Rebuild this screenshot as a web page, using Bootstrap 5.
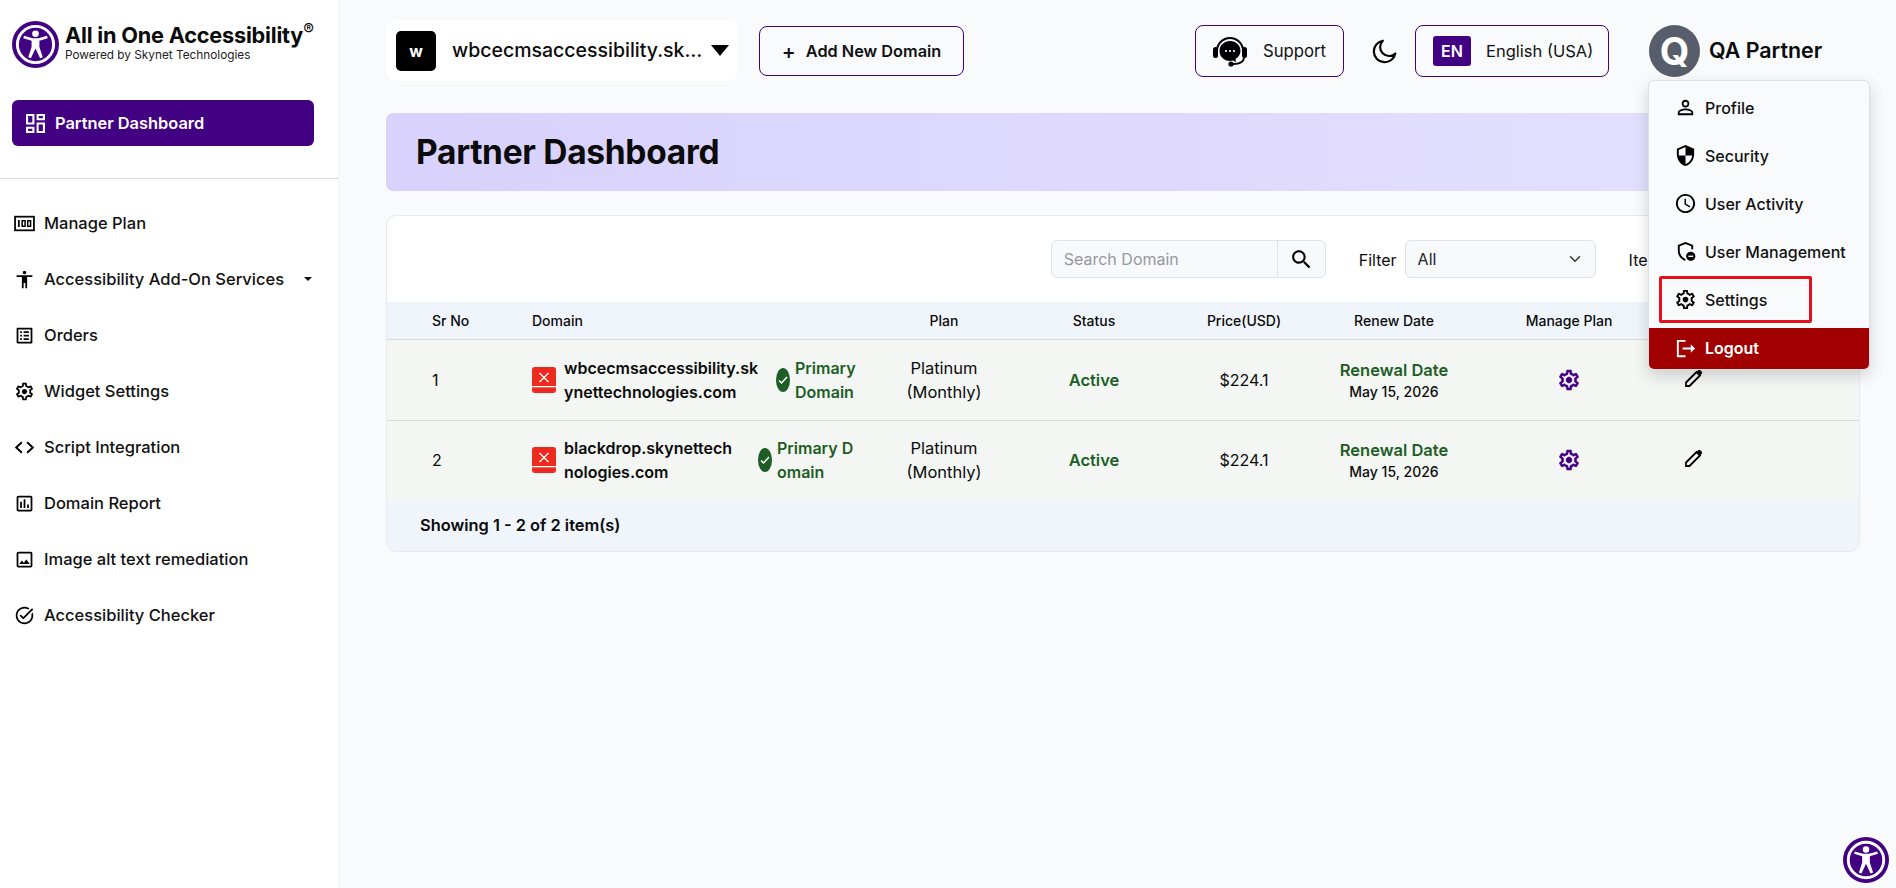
<!doctype html>
<html lang="en">
<head>
<meta charset="utf-8">
<title>Partner Dashboard</title>
<link href="https://cdn.jsdelivr.net/npm/bootstrap@5.3.0/dist/css/bootstrap.min.css" rel="stylesheet">
<style>
:root{--pu:#420083;--gr:#1e5e26}
html,body{height:100%}
body{font-family:Inter,"Liberation Sans",sans-serif;background:#f8fafc;color:#0b0b0b;overflow:hidden}
.shell{height:888px}
.side{width:339px;flex:none;background:#fff;border-right:1px solid #f0f2f5;height:100%}
.brand{padding:21px 12px 0;height:100px;gap:6px}
.brand-name{font-size:21.700px;font-weight:700;line-height:26px;padding-top:1px;letter-spacing:-.2px;white-space:nowrap}
.brand-name sup{font-size:16px;font-weight:500;top:-.5em}
.brand-sub{font-size:11.800px;line-height:15px;white-space:nowrap;color:#222}
.pd-btn{margin:0 24px 0 12px;height:46px;background:var(--pu);color:#fff;border-radius:6px;font-size:16.400px;font-weight:600;padding-left:14px;gap:10px;text-decoration:none}
.pd-btn:hover{color:#fff}
.side-rule{margin:32px 0 16px;border-color:#d8dbe0;opacity:1}
.side-link{height:56px;padding:0 26px 0 14px;gap:9px;color:#111;font-size:16.500px;font-weight:500;text-decoration:none}
.side-link:hover{color:#111}
.side-link svg{width:21px;height:21px;flex:none}
.side-link.dropdown-toggle::after{margin-left:auto;color:#111}
.main-area{min-width:0;padding:20px 36px 0 47px}
.top{height:61px;margin-bottom:32px}
.dom-pick{width:352px;height:61px;background:#fff;border-radius:10px;padding:0 9px 0 10px;font-size:19.500px;font-weight:500}
.dom-tile{width:40px;height:40px;background:#000;color:#fff;border-radius:5px;font-size:16px;font-weight:700;margin-right:16px;flex:none}
.dom-text{min-width:0;white-space:nowrap;flex:1 1 auto}
.tri{width:0;height:0;border-left:9px solid transparent;border-right:9px solid transparent;border-top:11px solid #000;flex:none}
.out-btn{border:1px solid var(--pu);border-radius:8px;background:transparent;color:#111;padding-top:8px}
.add-btn{width:205px;height:50px;margin-left:21px;font-size:16.300px;font-weight:600;gap:10px}
.add-btn span{font-size:21px;font-weight:500;line-height:1}
.add-btn:hover,.add-btn:active{border-color:var(--pu)!important;background:transparent!important;color:#111!important}
.sup-btn{width:149px;height:52px;gap:15px;font-size:16.700px;padding-left:16px}
.moon{width:26px;height:26px;margin:0 17px 0 28px;flex:none}
.lang-btn{width:194px;height:52px;font-size:16.500px;padding-left:17px;gap:15px}
.en-tile{width:38px;height:30px;background:var(--pu);color:#fff;border-radius:3px;font-weight:600;font-size:16px;margin-top:-1px}
.user-box{width:211px;height:52px;margin-left:40px;gap:9px;font-size:21.400px;font-weight:600;white-space:nowrap}
.avatar{width:51px;height:52px;border-radius:50%;background:#585d6b;color:#fff;font-size:38px;font-weight:700;flex:none;line-height:1}
.user-menu.dropdown-menu{display:block;top:55px;left:-1px;width:222px;padding:7px 0 0;margin:0;background:#f9fafc;border:1px solid #dcdfe3;border-radius:6px;box-shadow:0 6px 16px rgba(0,0,0,.16);overflow:hidden;z-index:1000}
.user-menu .dropdown-item{height:40px;padding:0 0 0 25px;gap:8px;font-size:16px;font-weight:500;color:#111;background:transparent}
.user-menu li+li{margin-top:8px}
.user-menu svg{width:23px;height:23px;flex:none}
.user-menu .dropdown-item.out-item{background:#a10000;color:#fff;font-weight:600;height:41px}
.mark-box{position:absolute;left:10px;top:195px;width:153px;height:47px;border:3px solid #e5101d;border-radius:2px;pointer-events:none}
.user-menu li.mark-box{margin:0}
.hero{height:78px;border-radius:7px;background:linear-gradient(90deg,#d8d2fc,#e5e1fe);padding-left:30px;margin-bottom:24px}
.hero h1{margin:0;font-size:33.500px;font-weight:700;letter-spacing:-.3px}
.panel{background:#fff;border:1px solid #e6e9ee;border-radius:10px;overflow:hidden;height:337px}
.tools{height:86px;padding:24px 0 0;font-size:16px}
.tools .input-group{width:275px;height:38px;flex:none}
.tools .form-control,.tools .form-select,.srch-btn{background-color:#f8f9fb;border-color:#dfe2e6;height:38px;font-size:16px}
.tools .form-control::placeholder{color:#94989e}
.srch-btn{width:49px;border:1px solid #dfe2e6;padding:0;color:#000}
.srch-btn svg{width:25px;height:25px}
.tools .lbl{margin-left:33px;margin-right:8px}
.filter-sel{width:191px;flex:none}
.items-sel{width:181px;flex:none}
.grid-tbl{table-layout:fixed;width:1472px;margin:0;font-size:16px;--bs-table-bg:transparent;--bs-table-color:#0b0b0b}
.grid-tbl thead th{height:37px;background:#f0f5fc;font-size:14px;font-weight:500;padding:0;vertical-align:middle;border-bottom:1px solid #d9dde0;text-align:center}
.grid-tbl td{background:#f3f6f3;padding:0;height:81px;vertical-align:middle;text-align:center;line-height:24px;border-bottom:1px solid #d9dde0}
.grid-tbl tr:last-child td{height:79px;border-bottom:0}
.grid-tbl .ta-l{text-align:left;padding-left:45px}
.grid-tbl .ta-d{text-align:left;padding-left:8px}
.grid-tbl .ta-e{text-align:left;padding-left:16px}
.x-icon{width:24px;height:26px;flex:none;margin-right:8px}
.dn{font-weight:600;white-space:nowrap;font-size:16px;flex:none}
.dn-a{width:212px}.dn-b{width:194px}
.tick{width:14px;height:24px;border-radius:50%;background:var(--gr);flex:none;margin-right:5px}
.tick svg{width:10px;height:10px}
.prim{color:var(--gr);font-weight:600;white-space:nowrap;font-size:16px}
.plan-txt{font-size:16.500px}
.ok-txt{color:var(--gr);font-weight:600;font-size:16.500px}
.rn-t{color:var(--gr);font-weight:600;font-size:16.500px;line-height:22px;padding-top:2px}
.rn-d{font-size:14px;font-weight:500;line-height:22px}
.gear-p{display:block;width:24px;height:24px;margin:0 auto;stroke:#420083;stroke-width:.5}
.pen{display:block;width:18px;height:18px;margin-top:-4px}
.tbl-foot{height:52px;background:#f0f5fc;padding-left:33px;font-size:16.400px;font-weight:600}
.a11y-fab{position:fixed;right:7px;bottom:5px;width:46px;height:46px}
</style>
</head>
<body>
<div class="d-flex shell">
  <aside class="side d-flex flex-column">
    <div class="brand d-flex align-items-start">
      <svg width="47" height="47" viewBox="0 0 48 48" class="flex-none"><circle cx="24" cy="24" r="24" fill="#420083"/><circle cx="24" cy="24" r="18.500" fill="none" stroke="#fff" stroke-width="3"/><circle cx="24" cy="13" r="3.400" fill="#fff"/><path d="M11.500 17.500l8.500 2.600v6.400L16.600 37l2.700 1 4.700-10 4.700 10 2.700-1L28 26.500v-6.400l8.500-2.600-.8-2.500-8.700 2.500h-6l-8.700-2.500z" fill="#fff"/></svg>
      <div>
        <div class="brand-name">All in One Accessibility<sup>®</sup></div>
        <div class="brand-sub">Powered by Skynet Technologies</div>
      </div>
    </div>
    <a href="#" class="pd-btn d-flex align-items-center">
      <svg width="19" height="19" viewBox="3 3 18 18" fill="#fff"><path d="M19 5v2h-4V5h4M9 5v6H5V5h4m10 8v6h-4v-6h4M9 17v2H5v-2h4M21 3h-8v6h8V3zM11 3H3v10h8V3zm10 8h-8v10h8V11zm-10 4H3v6h8v-6z"/></svg>
      Partner Dashboard
    </a>
    <hr class="side-rule">
    <nav class="nav flex-column">
      <a href="#" class="side-link d-flex align-items-center"><svg viewBox="0 0 24 24"><rect x="1.200" y="4.200" width="21.600" height="15.600" fill="none" stroke="#000" stroke-width="2"/><path d="M4.500 8h2v8h-2z"/><path fill-rule="evenodd" d="M8.500 8h5v8h-5zm1.700 1.600v4.800h1.600V9.600zM14.800 8h5v8h-5zm1.700 1.600v4.800h1.600V9.600z"/></svg>Manage Plan</a>
      <a href="#" class="side-link d-flex align-items-center dropdown-toggle"><svg viewBox="0 0 24 24"><path d="M12 2c1.100 0 2 .9 2 2s-.9 2-2 2-2-.9-2-2 .9-2 2-2zm9 7h-6v13h-2v-6h-2v6H9V9H3V7h18v2z"/></svg>Accessibility Add-On Services</a>
      <a href="#" class="side-link d-flex align-items-center"><svg viewBox="0 0 24 24"><path d="M19 5v14H5V5h14m1.100-2H3.900c-.5 0-.9.4-.9.9v16.200c0 .4.4.9.9.9h16.200c.4 0 .9-.5.9-.9V3.900c0-.5-.5-.9-.9-.9zM11 7h6v2h-6V7zm0 4h6v2h-6v-2zm0 4h6v2h-6zM7 7h2v2H7zm0 4h2v2H7zm0 4h2v2H7z"/></svg>Orders</a>
      <a href="#" class="side-link d-flex align-items-center"><svg viewBox="0 0 24 24"><use href="#gear"/></svg>Widget Settings</a>
      <a href="#" class="side-link d-flex align-items-center"><svg viewBox="0 0 24 24" fill="none" stroke="#000" stroke-width="2.200"><path d="M9 6l-6.500 6L9 18M15 6l6.500 6L15 18"/></svg>Script Integration</a>
      <a href="#" class="side-link d-flex align-items-center"><svg viewBox="0 0 24 24"><path d="M19 3H5c-1.100 0-2 .9-2 2v14c0 1.100.9 2 2 2h14c1.100 0 2-.9 2-2V5c0-1.100-.9-2-2-2zm0 16H5V5h14v14zM7 10h2v7H7zm4-3h2v10h-2zm4 6h2v4h-2z"/></svg>Domain Report</a>
      <a href="#" class="side-link d-flex align-items-center"><svg viewBox="0 0 24 24"><path d="M19 5v14H5V5h14m0-2H5c-1.100 0-2 .9-2 2v14c0 1.100.9 2 2 2h14c1.100 0 2-.9 2-2V5c0-1.100-.9-2-2-2zm-4.860 8.860l-3 3.870L9 13.140 6 17h12l-3.860-5.140z"/></svg>Image alt text remediation</a>
      <a href="#" class="side-link d-flex align-items-center"><svg viewBox="0 0 24 24"><path d="M22 5.180L10.590 16.600l-4.240-4.240 1.410-1.410 2.830 2.830 10-10L22 5.180zm-2.210 5.040c.13.570.21 1.170.21 1.780 0 4.420-3.580 8-8 8s-8-3.580-8-8 3.580-8 8-8c1.580 0 3.040.46 4.280 1.250l1.440-1.440C16.100 2.670 14.130 2 12 2 6.480 2 2 6.480 2 12s4.480 10 10 10 10-4.480 10-10c0-1.190-.22-2.330-.6-3.390l-1.610 1.610z"/></svg>Accessibility Checker</a>
    </nav>
  </aside>

  <main class="main-area flex-grow-1">
    <div class="top d-flex align-items-center">
      <div class="dom-pick d-flex align-items-center">
        <span class="dom-tile d-flex align-items-center justify-content-center">w</span>
        <span class="dom-text">wbcecmsaccessibility.sk…</span>
        <span class="tri"></span>
      </div>
      <button type="button" class="btn out-btn add-btn d-flex align-items-center justify-content-center"><span>+</span>Add New Domain</button>
      <button type="button" class="btn out-btn sup-btn d-flex align-items-center ms-auto">
        <svg width="36" height="30" viewBox="0 0 36 30"><path d="M5 14a13 13 0 0 1 26 0" fill="none" stroke="#000" stroke-width="2"/><rect x="1" y="10" width="5" height="11" rx="2.500"/><rect x="30" y="10" width="5" height="11" rx="2.500"/><path d="M18 4c-6 0-10.500 4.400-10.500 10S12 24 18 24c1 0 2-.1 3-.4L24 25l-.5-3c3-1.900 5-4.700 5-8C28.500 8.400 24 4 18 4z"/><path d="M32 20c0 5-5 7-11 7" fill="none" stroke="#000" stroke-width="1.800"/><circle cx="19" cy="27" r="2.600"/><circle cx="14" cy="14" r="1.100" fill="#fff"/><circle cx="18" cy="14" r="1.100" fill="#fff"/><circle cx="22" cy="14" r="1.100" fill="#fff"/></svg>
        Support
      </button>
      <svg class="moon" viewBox="0 0 24 24" fill="none" stroke="#000" stroke-width="2" stroke-linejoin="round"><path d="M21.500 14.300A10 10 0 1 1 10 2.500a8 8 0 0 0 11.500 11.800z"/></svg>
      <button type="button" class="btn out-btn lang-btn d-flex align-items-center"><span class="en-tile d-flex align-items-center justify-content-center">EN</span>English (USA)</button>
      <div class="user-box position-relative d-flex align-items-center">
        <span class="avatar d-flex align-items-center justify-content-center">Q</span>QA Partner
        <ul class="dropdown-menu user-menu list-unstyled">
          <li><a class="dropdown-item d-flex align-items-center" href="#"><svg viewBox="0 0 24 24"><path d="M12 5.900c1.160 0 2.100.94 2.100 2.100s-.94 2.100-2.100 2.100S9.900 9.160 9.900 8s.94-2.100 2.100-2.100m0 9c2.970 0 6.100 1.460 6.100 2.100v1.100H5.900V17c0-.64 3.130-2.100 6.100-2.100M12 4C9.790 4 8 5.790 8 8s1.790 4 4 4 4-1.790 4-4-1.790-4-4-4zm0 9c-2.670 0-8 1.340-8 4v3h16v-3c0-2.660-5.330-4-8-4z"/></svg>Profile</a></li>
          <li><a class="dropdown-item d-flex align-items-center" href="#"><svg viewBox="0 0 24 24"><path d="M12 1L3 5v6c0 5.550 3.840 10.740 9 12 5.160-1.260 9-6.450 9-12V5l-9-4zm0 10.990h7c-.53 4.120-3.280 7.790-7 8.940V12H5V6.300l7-3.110v8.800z"/></svg>Security</a></li>
          <li><a class="dropdown-item d-flex align-items-center" href="#"><svg viewBox="0 0 24 24"><path d="M11.990 2C6.470 2 2 6.480 2 12s4.470 10 9.990 10C17.520 22 22 17.520 22 12S17.520 2 11.990 2zM12 20c-4.420 0-8-3.580-8-8s3.580-8 8-8 8 3.580 8 8-3.580 8-8 8zm.5-13H11v6l5.250 3.150.75-1.230-4.500-2.670z"/></svg>User Activity</a></li>
          <li><a class="dropdown-item d-flex align-items-center" href="#"><svg viewBox="0 0 24 24"><path d="M12 2L4 5.200v6c0 4.800 3.100 9.200 7.500 10.600l.6-2c-3.400-1.200-6.100-4.800-6.100-8.600V6.600l6-2.400 6 2.400v3h2V5.200z"/><circle cx="17.500" cy="17" r="4.800"/><rect x="15" y="16.300" width="5" height="1.400" fill="#fff"/></svg>User Management</a></li>
          <li><a class="dropdown-item d-flex align-items-center" href="#"><svg viewBox="0 0 24 24"><use href="#gear"/></svg>Settings</a></li>
          <li><a class="dropdown-item out-item d-flex align-items-center" href="#"><svg viewBox="0 0 24 24" fill="#fff"><path d="M5 5h7V3H3v18h9v-2H5zM22 12l-4.500-4.500v3.500H9v2h8.500v3.500z"/></svg>Logout</a></li>
          <li class="mark-box"></li>
        </ul>
      </div>
    </div>

    <div class="hero d-flex align-items-center"><h1>Partner Dashboard</h1></div>

    <section class="panel">
      <div class="tools d-flex align-items-start justify-content-end">
        <div class="input-group">
          <input type="text" class="form-control" placeholder="Search Domain">
          <button type="button" class="srch-btn d-flex align-items-center justify-content-center rounded-end"><svg viewBox="0 0 24 24"><path d="M15.500 14h-.79l-.28-.27C15.410 12.590 16 11.110 16 9.500 16 5.910 13.090 3 9.500 3S3 5.910 3 9.500 5.910 16 9.500 16c1.610 0 3.090-.59 4.230-1.570l.27.28v.79l5 4.990L20.490 19l-4.990-5zm-6 0C7.010 14 5 11.990 5 9.500S7.010 5 9.500 5 14 7.010 14 9.500 11.990 14 9.500 14z"/></svg></button>
        </div>
        <label class="lbl lh-lg pt-1">Filter</label>
        <select class="form-select filter-sel"><option>All</option></select>
        <label class="lbl lh-lg pt-1">Items</label>
        <select class="form-select items-sel"><option>10</option></select>
      </div>
      <table class="table grid-tbl">
        <colgroup><col style="width:137px"><col style="width:345px"><col style="width:150px"><col style="width:150px"><col style="width:150px"><col style="width:150px"><col style="width:200px"><col style="width:190px"></colgroup>
        <thead><tr><th class="ta-l">Sr No</th><th class="ta-d">Domain</th><th>Plan</th><th>Status</th><th>Price(USD)</th><th>Renew Date</th><th>Manage Plan</th><th class="ta-e">Edit</th></tr></thead>
        <tbody>
          <tr>
            <td class="ta-l">1</td>
            <td class="ta-d"><div class="d-flex align-items-center">
              <svg class="x-icon" viewBox="0 0 24 26"><rect width="24" height="26" rx="3" fill="#ee2a1e"/><path d="M7.500 6l9 9M16.500 6l-9 9" stroke="#fff" stroke-width="1.300"/><rect y="19" width="24" height="1.300" fill="#fff"/></svg>
              <span class="dn dn-a">wbcecmsaccessibility.sk<br>ynettechnologies.com</span>
              <span class="tick d-flex align-items-center justify-content-center"><svg viewBox="0 0 10 10" fill="none" stroke="#fff" stroke-width="1.500"><path d="M1 5.500l2.500 2.500L9 2"/></svg></span>
              <span class="prim">Primary<br>Domain</span>
            </div></td>
            <td class="plan-txt">Platinum<br>(Monthly)</td>
            <td class="ok-txt">Active</td>
            <td>$224.1</td>
            <td><div class="rn-t">Renewal Date</div><div class="rn-d">May 15, 2026</div></td>
            <td><svg class="gear-p" viewBox="0 0 24 24" fill="#420083"><use href="#gear"/></svg></td>
            <td class="ta-e"><svg class="pen" viewBox="0 0 18 18"><use href="#pen"/></svg></td>
          </tr>
          <tr>
            <td class="ta-l">2</td>
            <td class="ta-d"><div class="d-flex align-items-center">
              <svg class="x-icon" viewBox="0 0 24 26"><rect width="24" height="26" rx="3" fill="#ee2a1e"/><path d="M7.500 6l9 9M16.500 6l-9 9" stroke="#fff" stroke-width="1.300"/><rect y="19" width="24" height="1.300" fill="#fff"/></svg>
              <span class="dn dn-b">blackdrop.skynettech<br>nologies.com</span>
              <span class="tick d-flex align-items-center justify-content-center"><svg viewBox="0 0 10 10" fill="none" stroke="#fff" stroke-width="1.500"><path d="M1 5.500l2.500 2.500L9 2"/></svg></span>
              <span class="prim">Primary D<br>omain</span>
            </div></td>
            <td class="plan-txt">Platinum<br>(Monthly)</td>
            <td class="ok-txt">Active</td>
            <td>$224.1</td>
            <td><div class="rn-t">Renewal Date</div><div class="rn-d">May 15, 2026</div></td>
            <td><svg class="gear-p" viewBox="0 0 24 24" fill="#420083"><use href="#gear"/></svg></td>
            <td class="ta-e"><svg class="pen" viewBox="0 0 18 18"><use href="#pen"/></svg></td>
          </tr>
        </tbody>
      </table>
      <div class="tbl-foot d-flex align-items-center">Showing 1 - 2 of 2 item(s)</div>
    </section>
  </main>
</div>

<svg class="a11y-fab" viewBox="0 0 48 48"><circle cx="24" cy="24" r="24" fill="#420083"/><circle cx="24" cy="24" r="18.500" fill="none" stroke="#fff" stroke-width="3"/><circle cx="24" cy="13" r="3.400" fill="#fff"/><path d="M11.500 17.500l8.500 2.600v6.400L16.600 37l2.700 1 4.700-10 4.700 10 2.700-1L28 26.500v-6.400l8.500-2.600-.8-2.500-8.700 2.500h-6l-8.700-2.500z" fill="#fff"/></svg>

<svg width="0" height="0" class="position-absolute">
  <defs>
    <path id="gear" d="M19.430 12.980c.04-.32.07-.64.07-.98 0-.34-.03-.66-.07-.98l2.110-1.650c.19-.15.24-.42.12-.64l-2-3.460c-.09-.16-.26-.25-.44-.25-.06 0-.12.01-.17.03l-2.490 1c-.52-.4-1.080-.73-1.690-.98l-.38-2.650C14.460 2.180 14.250 2 14 2h-4c-.25 0-.46.18-.49.42l-.38 2.650c-.61.25-1.170.59-1.690.98l-2.490-1c-.06-.02-.12-.03-.18-.03-.17 0-.34.09-.43.25l-2 3.460c-.13.22-.07.49.12.64l2.110 1.650c-.04.32-.07.65-.07.98 0 .33.03.66.07.98l-2.110 1.650c-.19.15-.24.42-.12.64l2 3.460c.09.16.26.25.44.25.06 0 .12-.01.17-.03l2.490-1c.52.4 1.080.73 1.690.98l.38 2.650c.03.24.24.42.49.42h4c.25 0 .46-.18.49-.42l.38-2.650c.61-.25 1.170-.59 1.690-.98l2.490 1c.06.02.12.03.18.03.17 0 .34-.09.43-.25l2-3.460c.12-.22.07-.49-.12-.64l-2.110-1.650zm-1.980-1.710c.04.31.05.52.05.73 0 .21-.02.43-.05.73l-.14 1.130.89.7 1.080.84-.7 1.210-1.270-.51-1.040-.42-.9.68c-.43.32-.84.56-1.250.73l-1.060.43-.16 1.130-.2 1.350h-1.400l-.19-1.350-.16-1.130-1.060-.43c-.43-.18-.83-.41-1.230-.71l-.91-.7-1.060.43-1.270.51-.7-1.210 1.080-.84.89-.7-.14-1.130c-.03-.31-.05-.54-.05-.74s.02-.43.05-.73l.14-1.130-.89-.7-1.080-.84.7-1.210 1.270.51 1.040.42.9-.68c.43-.32.84-.56 1.250-.73l1.060-.43.16-1.130.2-1.350h1.390l.19 1.350.16 1.130 1.060.43c.43.18.83.41 1.230.71l.91.7 1.060-.43 1.270-.51.7 1.210-1.070.85-.89.7.14 1.130zM12 9c-1.660 0-3 1.340-3 3s1.340 3 3 3 3-1.340 3-3-1.340-3-3-3z"/>
    <g id="pen"><path d="M1 13.500L11.500 3 15 6.500 4.500 17H1z" fill="none" stroke="#000" stroke-width="1.800"/><path d="M11 3.500l2.200-2.200a1.500 1.500 0 0 1 2.100 0l1.400 1.400a1.500 1.500 0 0 1 0 2.100L14.500 7z"/></g>
  </defs>
</svg>
<script src="https://cdn.jsdelivr.net/npm/bootstrap@5.3.0/dist/js/bootstrap.bundle.min.js"></script>
</body>
</html>
